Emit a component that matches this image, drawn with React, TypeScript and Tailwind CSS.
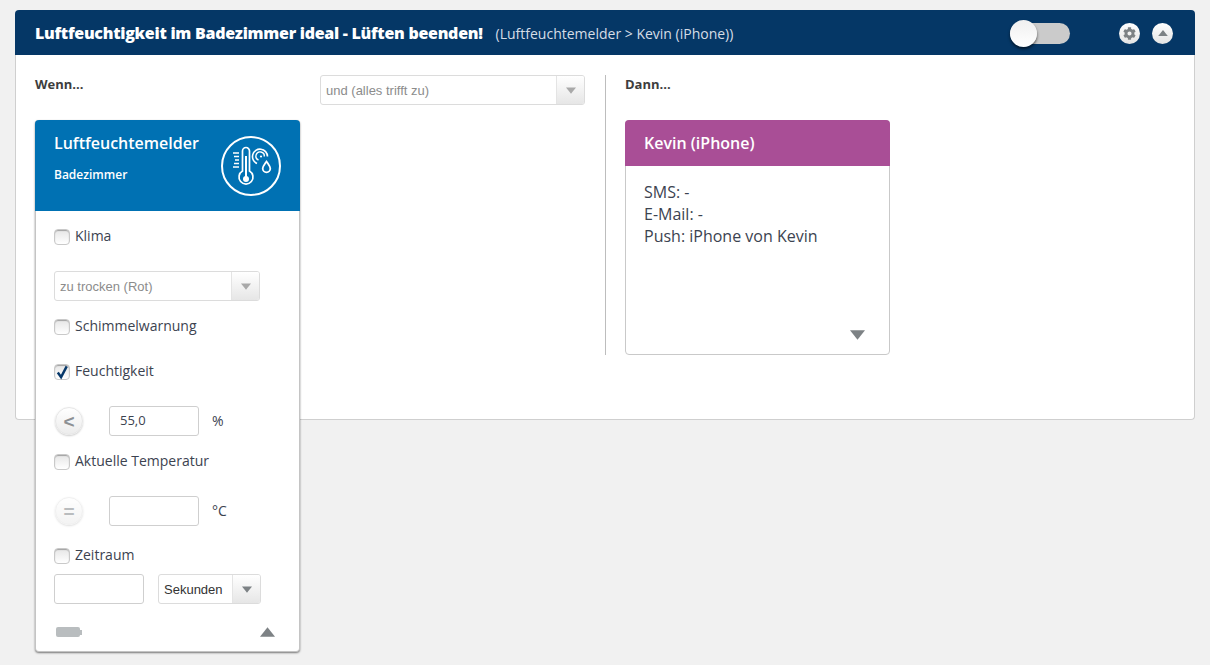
import React from "react";
import { FaCog } from "react-icons/fa";

const OPEN_SANS = "font-['Open_Sans',sans-serif]";
const ARIAL = "font-['Liberation_Sans',Arial,sans-serif]";

function Triangle({ dir = "down", className = "" }: { dir?: "up" | "down"; className?: string }) {
  return (
    <svg viewBox="0 0 16 10" className={className}>
      <path d={dir === "down" ? "M0 0H16L8 10Z" : "M0 10H16L8 0Z"} fill="currentColor" />
    </svg>
  );
}

function Select({ value, width, dark }: { value: string; width: string; dark?: boolean }) {
  return (
    <div className={`${width} h-[30px] flex border border-[#dcdcdc] rounded-[3px] bg-white overflow-hidden ${dark ? "border-[#c4c4c4]" : ""}`}>
      <div className={`flex-1 flex items-center pl-[5px] pt-[1px] text-[13px] ${ARIAL} ${dark ? "text-[#333]" : "text-[#8c8c8c]"}`}>
        {value}
      </div>
      <div className="w-[28px] flex items-center justify-center border-l border-[#e4e4e4] bg-gradient-to-b from-white to-[#e6e6e6]">
        <Triangle className={`w-[10px] h-[7px] ${dark ? "text-[#7d8285]" : "text-[#a9a9a9]"}`} />
      </div>
    </div>
  );
}

function Check({ label, checked, className = "" }: { label: string; checked?: boolean; className?: string }) {
  return (
    <div className={`h-[20px] pt-[2px] flex items-center gap-[5px] ${className}`}>
      <div className="relative w-[16px] h-[16px] rounded-[4px] border border-[#c9c9c9] bg-gradient-to-b from-[#e6e6e6] to-white shadow-[inset_0_1px_1px_rgba(0,0,0,0.3)]">
        {checked && (
          <svg viewBox="0 0 16 16" className="absolute left-[0px] -top-[2px] w-[15px] h-[18px]">
            <path d="M3 8.5 6.5 13.5 12.5 2" fill="none" stroke="#07386a" strokeWidth="2.6" />
          </svg>
        )}
      </div>
      <span className="text-[14px] leading-[20px] text-[#3c4350] -mt-[3px]">{label}</span>
    </div>
  );
}

function RoundButton({ label, muted }: { label: string; muted?: boolean }) {
  return (
    <div className={`w-[28px] h-[28px] ml-[1px] rounded-full flex items-center justify-center bg-gradient-to-b from-white to-[#ececec] border border-[#e6e6e6] shadow-[0_1px_2px_rgba(0,0,0,0.2)] ${muted ? "opacity-60" : ""}`}>
      <span className={`text-[19px] leading-none font-bold text-[#8c9094] ${ARIAL}`}>{label}</span>
    </div>
  );
}

function ValueRow({ compare, value, unit, muted, className = "" }: { compare: string; value: string; unit: string; muted?: boolean; className?: string }) {
  return (
    <div className={`h-[30px] flex items-center ${className}`}>
      <RoundButton label={compare} muted={muted} />
      <div className="ml-[26px] w-[90px] h-[30px] flex items-center pl-[10px] border border-[#cfcfcf] rounded-[3px] text-[13px] text-[#3c4350]">
        {value}
      </div>
      <span className="ml-[13px] -mt-[2px] text-[14px] text-[#3c4350]">{unit}</span>
    </div>
  );
}

function SensorIcon() {
  return (
    <svg viewBox="0 0 60 60" className="w-[60px] h-[60px] shrink-0" fill="none" stroke="white">
      <circle cx="30" cy="30" r="29" strokeWidth="2" />
      <path d="M21.5 35V15a3.5 3.5 0 0 1 7 0v20a7 7 0 1 1-7 0Z" strokeWidth="1.7" />
      <path d="M25 20v22" strokeWidth="2" />
      <circle cx="25" cy="43" r="3" fill="white" stroke="none" />
      <path d="M12 17h6M13 20.5h5M14 24h4M13 27.5h5M12 31h6" strokeWidth="1.6" />
      <path d="M36 27.5a7.5 7.5 0 1 1 10.5-7" strokeWidth="1.6" />
      <path d="M37.5 24a4.2 4.2 0 1 1 5.8-3.5" strokeWidth="1.4" />
      <circle cx="40" cy="20.5" r="1.1" fill="white" stroke="none" />
      <path d="M45.5 25.5c2 3 3.8 5 3.8 7a3.8 3.8 0 0 1-7.6 0c0-2 1.8-4 3.8-7Z" strokeWidth="1.8" />
    </svg>
  );
}

function SensorCard() {
  return (
    <div className="relative w-[265px] rounded-[4px] bg-white border-x border-b border-[#c4c4c4] shadow-[0_1px_2px_rgba(0,0,0,0.5)]">
      <div className="-mx-[1px] h-[91px] bg-[#0071b3] rounded-t-[4px] pl-[19px] pr-[19px] pt-[12px] flex justify-between items-start">
        <div className="text-white">
          <div className="text-[16px] leading-[22px] font-semibold">Luftfeuchtemelder</div>
          <div className="mt-[12px] text-[12px] leading-[18px] font-semibold">Badezimmer</div>
        </div>
        <div className="pt-[4px]">
          <SensorIcon />
        </div>
      </div>
      <div className="pl-[18px] pr-[19px] pt-[15px] pb-[14px]">
        <Check label="Klima" />
        <div className="mt-[25px]">
          <Select value="zu trocken (Rot)" width="w-[206px]" />
        </div>
        <Check label="Schimmelwarnung" className="mt-[15px]" />
        <Check label="Feuchtigkeit" checked className="mt-[25px]" />
        <ValueRow compare="<" value="55,0" unit="%" className="mt-[25px]" />
        <Check label="Aktuelle Temperatur" className="mt-[15px]" />
        <ValueRow compare="=" value="" unit="°C" muted className="mt-[25px]" />
        <Check label="Zeitraum" className="mt-[19px]" />
        <div className="mt-[9px] flex gap-[14px]">
          <div className="w-[90px] h-[30px] border border-[#cfcfcf] rounded-[3px]" />
          <Select value="Sekunden" width="w-[103px]" dark />
        </div>
        <div className="mt-[23px] h-[10px] flex items-center justify-between pl-[2px] pr-[5px]">
          <div className="flex items-center">
            <div className="w-[24px] h-[10px] rounded-[2px] bg-[#b9bdbf]" />
            <div className="w-[2px] h-[5px] bg-[#b9bdbf]" />
          </div>
          <Triangle dir="up" className="w-[15px] h-[10px] text-[#7d8285]" />
        </div>
      </div>
    </div>
  );
}

function ActionCard() {
  return (
    <div className="w-[265px] h-[235px] flex flex-col rounded-[4px] border border-[#c9c9c9] bg-white">
      <div className="-mx-[1px] -mt-[1px] h-[46px] rounded-t-[4px] bg-[#a94e96] pl-[19px] flex items-center text-[16px] font-semibold text-white">
        Kevin (iPhone)
      </div>
      <div className="flex-1 pl-[18px] pt-[15px] text-[16px] leading-[22px] text-[#3c4350]">
        <div>SMS: -</div>
        <div>E-Mail: -</div>
        <div>Push: iPhone von Kevin</div>
      </div>
      <div className="flex justify-end pr-[24px] pb-[14px]">
        <Triangle className="w-[15px] h-[10px] text-[#7d8285]" />
      </div>
    </div>
  );
}

export default function App() {
  return (
    <div className={`h-[665px] overflow-hidden bg-[#f1f1f1] pt-[10px] px-[15px] ${OPEN_SANS}`}>
      {/* header */}
      <div className="h-[45px] bg-[#053766] rounded-t-[4px] flex items-center pt-[1px] pl-[20px] pr-[22px]">
        <span className="text-[16px] font-extrabold text-white tracking-[-0.27px]">
          Luftfeuchtigkeit im Badezimmer ideal - Lüften beenden!
        </span>
        <span className="ml-[13px] text-[14px] text-[#d5dde6]">(Luftfeuchtemelder &gt; Kevin (iPhone))</span>
        <div className="ml-auto relative w-[60px] h-[21px] rounded-full bg-[#cbcbcb] mr-[49px]">
          <div className="absolute left-0 -top-[3px] w-[27px] h-[27px] rounded-full bg-gradient-to-b from-[#f0f0f0] to-white shadow-[0_2px_3px_rgba(0,0,0,0.6)]" />
        </div>
        <div className="w-[21px] h-[21px] rounded-full bg-gradient-to-b from-white to-[#e4e4e4] flex items-center justify-center">
          <FaCog className="w-[13px] h-[13px] text-[#7d8285]" />
        </div>
        <div className="ml-[12px] w-[21px] h-[21px] rounded-full bg-gradient-to-b from-white to-[#e4e4e4] flex items-center justify-center">
          <Triangle dir="up" className="w-[10px] h-[6px] text-[#7d8285]" />
        </div>
      </div>
      {/* body */}
      <div className="h-[365px] bg-white border border-t-0 border-[#cfcfcf] rounded-b-[4px] pl-[19px] pt-[20px] flex">
        <div className="w-[265px]">
          <div className="h-[20px] text-[13px] leading-[19px] font-bold text-[#3d3d3d]">Wenn...</div>
          <div className="mt-[25px]">
            <SensorCard />
          </div>
        </div>
        <div className="ml-[20px]">
          <Select value="und (alles trifft zu)" width="w-[265px]" />
        </div>
        <div className="ml-[20px] w-[1px] h-[280px] bg-[#bdbdbd]" />
        <div className="ml-[19px]">
          <div className="h-[20px] text-[13px] leading-[19px] font-bold text-[#3d3d3d]">Dann...</div>
          <div className="mt-[25px]">
            <ActionCard />
          </div>
        </div>
      </div>
    </div>
  );
}
